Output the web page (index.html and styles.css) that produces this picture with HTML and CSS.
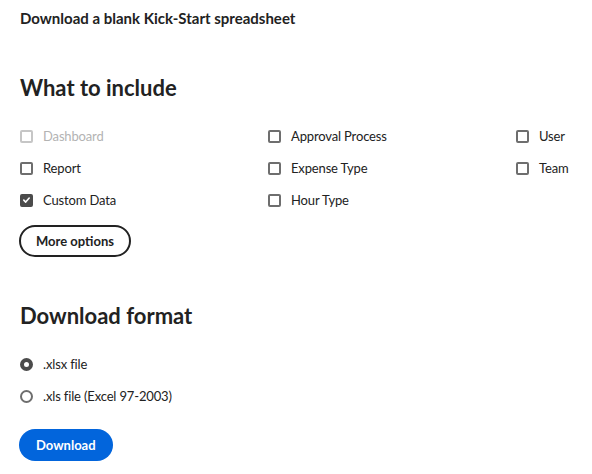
FILE: index.html
```html
<!DOCTYPE html>
<html lang="en">
<head>
<meta charset="utf-8">
<title>Download a blank Kick-Start spreadsheet</title>
<link rel="stylesheet" href="styles.css">
</head>
<body>
<div class="page">
  <h1 class="title">Download a blank Kick-Start spreadsheet</h1>

  <h2 class="heading heading-first">What to include</h2>
  <div class="options">
    <label class="check disabled"><span class="box"></span><span class="label">Dashboard</span></label>
    <label class="check"><span class="box"></span><span class="label">Approval Process</span></label>
    <label class="check"><span class="box"></span><span class="label">User</span></label>
    <label class="check"><span class="box"></span><span class="label">Report</span></label>
    <label class="check"><span class="box"></span><span class="label">Expense Type</span></label>
    <label class="check"><span class="box"></span><span class="label">Team</span></label>
    <label class="check checked"><span class="box"><svg viewBox="0 0 10 10" width="10" height="10"><path d="M2 5.2 L4.1 7.3 L8 2.8" fill="none" stroke="#fff" stroke-width="1.8" stroke-linecap="round" stroke-linejoin="round"/></svg></span><span class="label">Custom Data</span></label>
    <label class="check"><span class="box"></span><span class="label">Hour Type</span></label>
  </div>
  <button class="btn-outline">More options</button>

  <h2 class="heading heading-second">Download format</h2>
  <div class="radios">
    <label class="radio selected"><span class="circle"></span><span class="label">.xlsx file</span></label>
    <label class="radio"><span class="circle"></span><span class="label">.xls file (Excel 97-2003)</span></label>
  </div>
  <button class="btn-primary">Download</button>
</div>
</body>
</html>
```

FILE: styles.css
```css
* { box-sizing: border-box; }
html, body { margin: 0; padding: 0; background: #fff; }
body {
  font-family: "Lato", "Open Sans", sans-serif;
  color: #222;
  font-size: 14px;
}
.page {
  padding: 8px 0 0 20px;
}
.title {
  margin: 0;
  font-size: 15px;
  line-height: 20px;
  font-weight: 700;
}
.heading {
  margin: 0;
  font-size: 22px;
  line-height: 30px;
  font-weight: 700;
  color: #222;
}
.heading-first { margin-top: 45px; }
.heading-second { margin-top: 44px; }
.options {
  margin-top: 17px;
  display: grid;
  grid-template-columns: 248px 248px auto;
}
.check, .radio {
  display: flex;
  align-items: center;
  height: 32px;
  gap: 10px;
  font-size: 13px;
  letter-spacing: -0.15px;
}
.label { padding-bottom: 1px; }
.box {
  width: 13px;
  height: 13px;
  border: 2px solid #6e6e6e;
  border-radius: 2px;
  display: flex;
  align-items: center;
  justify-content: center;
  flex: none;
}
.checked .box {
  background: #4b4b4b;
  border-color: #4b4b4b;
}
.disabled .box { border-color: #c6c6c6; }
.disabled .label { color: #b3b3b3; }
.btn-outline {
  margin-top: 9px;
  margin-left: -1px;
  height: 32px;
  padding: 0 15px 1px;
  border: 2px solid #222;
  border-radius: 16px;
  background: #fff;
  color: #222;
  font: 700 13px "Lato", sans-serif;
  display: block;
}
.radios { margin-top: 17px; }
.circle {
  width: 13px;
  height: 13px;
  border-radius: 50%;
  border: 2px solid #6e6e6e;
  flex: none;
}
.selected .circle {
  border: 4px solid #4b4b4b;
}
.btn-primary {
  margin-top: 17px;
  margin-left: -1px;
  height: 32px;
  padding: 0 17px 1px;
  border: none;
  border-radius: 16px;
  background: #0265dc;
  color: #fff;
  font: 700 13px "Lato", sans-serif;
  display: block;
}
```
